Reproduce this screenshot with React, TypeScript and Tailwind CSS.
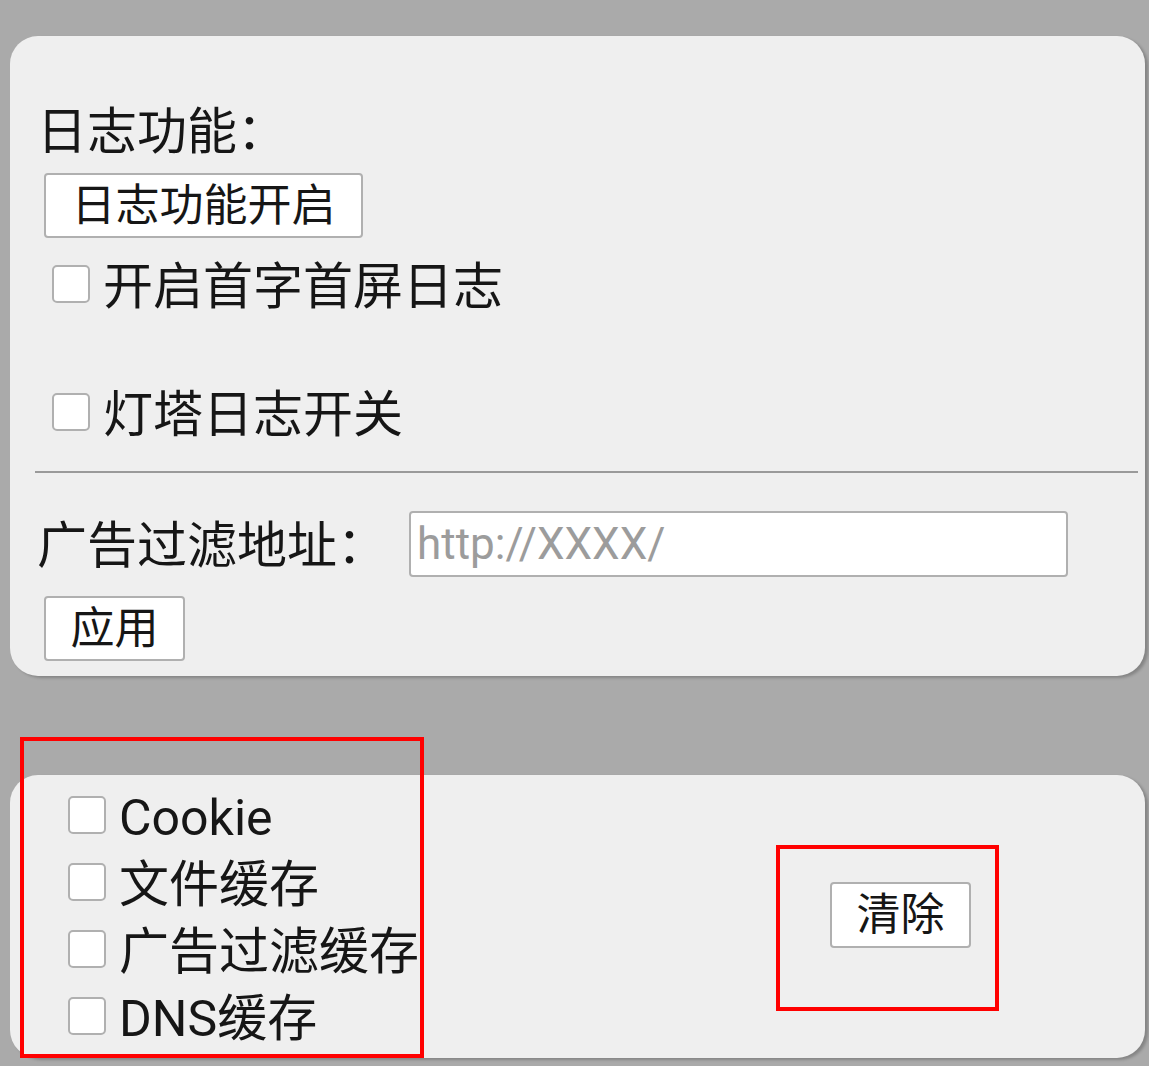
import React from "react";

const font = {
  fontFamily: 'Roboto, "Noto Sans CJK SC", "Noto Sans", sans-serif',
};

function Box() {
  return (
    <span className="inline-block w-[38px] h-[38px] shrink-0 rounded-[5px] border-2 border-[#b0b0b0] bg-white" />
  );
}

function CheckRow({ label, cls }: { label: string; cls?: string }) {
  return (
    <label className={"flex items-center h-[56px] " + (cls ?? "")}>
      <Box />
      <span className="ml-[13px] mt-[6px] text-[50px] leading-[50px] text-[#161616] whitespace-nowrap">{label}</span>
    </label>
  );
}

export default function App() {
  return (
    <div
      style={font}
      className="relative w-[1149px] h-[1066px] overflow-hidden bg-[#aaaaaa] pt-[36px] pl-[10px] pr-[4px]"
    >
      {/* Card 1 */}
      <div className="h-[640px] rounded-[28px] bg-[#efefef] shadow-[3px_2px_3px_rgba(0,0,0,0.22)] pt-[70px] flex flex-col">
        <div className="pl-[27px] text-[50px] leading-[52px] text-[#161616]">日志功能：</div>
        <button className="ml-[34px] mt-[15px] w-[319px] h-[65px] bg-white border-2 border-[#b0b0b0] rounded-[4px] text-[44px] leading-none text-[#161616] flex items-center justify-center">
          日志功能开启
        </button>
        <CheckRow label="开启首字首屏日志" cls="ml-[42px] mt-[18px]" />
        <CheckRow label="灯塔日志开关" cls="ml-[42px] mt-[72px]" />
        <div className="ml-[25px] mr-[7px] mt-[31px] h-[2px] bg-[#9a9a9a]" />
        <div className="flex items-center mt-[38px]">
          <span className="pl-[27px] mt-[4px] text-[50px] leading-[56px] text-[#161616] whitespace-nowrap">广告过滤地址：</span>
          <input
            className="ml-[22px] w-[659px] h-[66px] bg-white border-2 border-[#b0b0b0] rounded-[4px] px-[6px] text-[44px] text-[#161616] placeholder:text-[#9c9c9c] outline-none"
            style={{ fontFamily: 'Roboto, "Noto Sans CJK SC", sans-serif' }}
            placeholder="http://XXXX/"
          />
        </div>
        <button className="ml-[34px] mt-[19px] w-[141px] h-[65px] bg-white border-2 border-[#b0b0b0] rounded-[4px] text-[44px] leading-none text-[#161616] flex items-center justify-center">
          应用
        </button>
      </div>

      {/* Card 2 */}
      <div className="mt-[99px] h-[283px] rounded-[28px] bg-[#efefef] shadow-[3px_2px_3px_rgba(0,0,0,0.22)] flex items-center">
        <div className="self-start pl-[58px] pt-[12px] flex flex-col gap-[11px]">
          <CheckRow label="Cookie" />
          <CheckRow label="文件缓存" />
          <CheckRow label="广告过滤缓存" />
          <CheckRow label="DNS缓存" />
        </div>
        <button className="ml-auto mr-[174px] mb-[4px] w-[141px] h-[66px] bg-white border-2 border-[#b0b0b0] rounded-[4px] text-[44px] leading-none text-[#161616] flex items-center justify-center">
          清除
        </button>
      </div>

      {/* annotation boxes */}
      <div className="absolute left-[20px] top-[737px] w-[404px] h-[321px] border-4 border-[#ff0000] pointer-events-none" />
      <div className="absolute left-[776px] top-[845px] w-[223px] h-[166px] border-4 border-[#ff0000] pointer-events-none" />
    </div>
  );
}
